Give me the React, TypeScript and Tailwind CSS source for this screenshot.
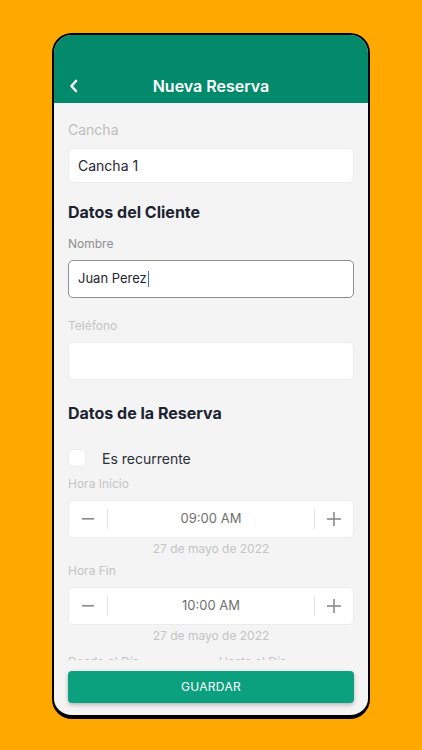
import React from "react";

function Stepper({ value }: { value: string }) {
  return (
    <div className="flex h-[38px] items-center rounded-[5px] border border-[#ececec] bg-white">
      <div className="flex w-[38px] items-center justify-center text-[20px] leading-none text-[#8a8a8a]">
        <svg width="12" height="2" viewBox="0 0 12 2"><rect width="12" height="1.6" fill="#8a8a8a" /></svg>
      </div>
      <div className="h-[20px] w-px bg-[#e2e2e2]" />
      <div className="flex-1 text-center text-[13px] text-[#707070]">{value}</div>
      <div className="h-[20px] w-px bg-[#e2e2e2]" />
      <div className="flex w-[38px] items-center justify-center">
        <svg width="14" height="14" viewBox="0 0 14 14">
          <rect x="0" y="6.2" width="14" height="1.6" fill="#8a8a8a" />
          <rect x="6.2" y="0" width="1.6" height="14" fill="#8a8a8a" />
        </svg>
      </div>
    </div>
  );
}

export default function App() {
  return (
    <div
      className="flex h-[750px] w-[422px] justify-center bg-[#FFA800] pt-[33px]"
      style={{ fontFamily: "Inter, 'Noto Sans', sans-serif" }}
    >
      <div className="flex h-[686px] w-[318px] flex-col overflow-hidden rounded-[20px] border-x-[2px] border-t-[2px] border-b-[4px] border-black bg-[#F4F4F4]">
        <div className="grid h-[68px] shrink-0 grid-cols-[1fr_auto_1fr] items-end bg-[#038A6B] pb-[6px]">
          <div className="flex h-[22px] items-center pl-[15px]">
            <svg width="9" height="14" viewBox="0 0 9 14">
              <path d="M7 2 L2.5 7 L7 12" fill="none" stroke="white" strokeWidth="2.6" strokeLinecap="round" strokeLinejoin="round" />
            </svg>
          </div>
          <div className="text-[16px] font-semibold leading-[22px] text-white">Nueva Reserva</div>
          <div />
        </div>

        <div className="flex-1 overflow-hidden px-[14px]">
          <div className="mt-[17px] text-[14px] leading-[20px] text-[#bdbdbd]">Cancha</div>
          <div className="mt-[8px] flex h-[35px] items-center rounded-[5px] border border-[#ececec] bg-white px-[9px] text-[14px] text-[#1f2430]">
            Cancha 1
          </div>

          <div className="mt-[18px] text-[16px] font-bold leading-[22px] text-[#1b2230]">Datos del Cliente</div>
          <div className="mt-[13px] text-[12px] leading-[16px] text-[#8e8e8e]">Nombre</div>
          <div className="mt-[8px] flex h-[38px] items-center rounded-[5px] border border-[#8f8f8f] bg-white px-[9px] text-[13px] text-[#1f2430]">
            Juan Perez<span className="ml-px inline-block h-[16px] w-[1.5px] bg-[#3b6fe0]" />
          </div>

          <div className="mt-[20px] text-[12px] leading-[16px] text-[#c4c4c4]">Teléfono</div>
          <div className="mt-[8px] h-[38px] rounded-[5px] border border-[#ececec] bg-white" />

          <div className="mt-[22px] text-[16px] font-bold leading-[22px] text-[#1b2230]">Datos de la Reserva</div>

          <div className="mt-[24px] flex h-[20px] items-center">
            <div className="h-[18px] w-[18px] rounded-[4px] border border-[#ececec] bg-white" />
            <div className="ml-[16px] text-[14px] text-[#2a2f38]">Es recurrente</div>
          </div>

          <div className="mt-[8px] text-[12px] leading-[16px] text-[#c4c4c4]">Hora Inicio</div>
          <div className="mt-[8px]">
            <Stepper value="09:00 AM" />
          </div>
          <div className="mt-[3px] text-center text-[12px] leading-[16px] text-[#c4c4c4]">27 de mayo de 2022</div>

          <div className="mt-[6px] text-[12px] leading-[16px] text-[#c4c4c4]">Hora Fin</div>
          <div className="mt-[8px]">
            <Stepper value="10:00 AM" />
          </div>
          <div className="mt-[3px] text-center text-[12px] leading-[16px] text-[#c4c4c4]">27 de mayo de 2022</div>

          <div className="mt-[10px] grid grid-cols-2 text-[12px] leading-[16px] text-[#c4c4c4]">
            <div>Desde el Día</div>
            <div className="pl-[8px]">Hasta el Día</div>
          </div>
        </div>

        <div className="shrink-0 px-[14px] pb-[12px] pt-[11px]">
          <div className="flex h-[32px] items-center justify-center rounded-[4px] bg-[#0BA07E] text-[12px] tracking-[0.3px] text-white shadow-[0_2px_4px_rgba(0,0,0,0.25)]">
            GUARDAR
          </div>
        </div>
      </div>
    </div>
  );
}
